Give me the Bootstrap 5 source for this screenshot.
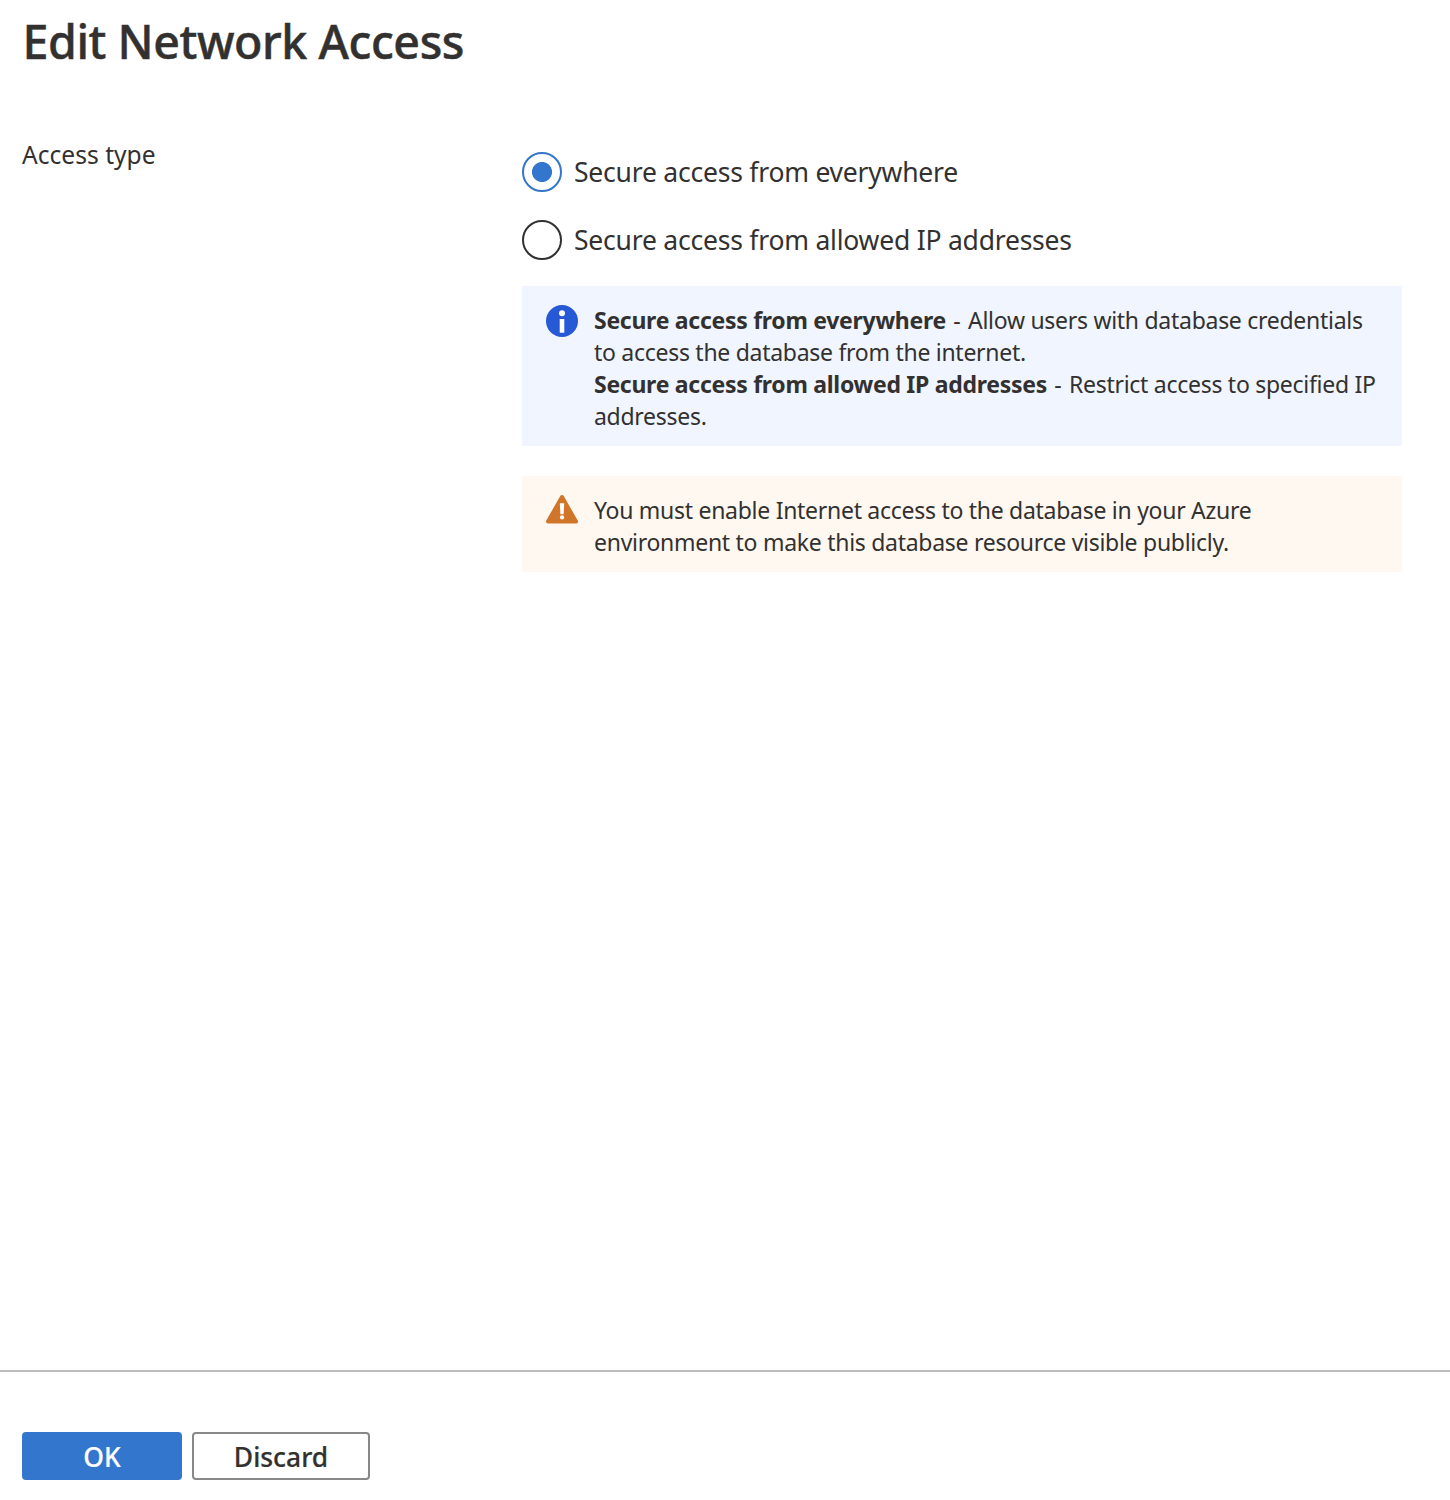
<!DOCTYPE html>
<html lang="en">
<head>
<meta charset="utf-8">
<meta name="viewport" content="width=device-width, initial-scale=1">
<title>Edit Network Access</title>
<link href="https://cdn.jsdelivr.net/npm/bootstrap@5.3.0/dist/css/bootstrap.min.css" rel="stylesheet">
<style>
body{font-family:"Noto Sans","Open Sans",sans-serif;color:#323130;background:#fff}
.page-title{font-size:46.5px;font-weight:500;line-height:60px;letter-spacing:-.42px;-webkit-text-stroke:.5px #323130;padding:11px 0 0 22.5px;white-space:nowrap}
.form-area{padding:68px 48px 0 22px}
.field-label{width:500px;font-size:24.6px;line-height:32px}
.field-body{width:880px;padding-top:13px}
.choice{height:40px;font-size:26.5px;letter-spacing:-.22px;margin-bottom:28px;gap:12px;white-space:nowrap}
.choice span{padding-top:2px}
.choice .form-check-input{width:40px;height:40px;border:2px solid #323130;box-shadow:none}
.choice .form-check-input:checked{border-color:#3376cd;background:#fff radial-gradient(circle,#3376cd 9.6px,transparent 10.4px)}
.note{font-size:23px;line-height:32px;letter-spacing:-.28px;padding:18px 16px 14px 24px;gap:16px;border:0;border-radius:0;color:#323130;white-space:nowrap}
.note-info{background:#f0f5ff;margin:-2px 0 30px}
.note-warn{background:#fff8f1}
.dash{padding:0 2px 0 1.5px}
.footer-bar{height:130px;border-top:2px solid #bdbdbd;padding:60px 22px 0;gap:10px}
.action{height:48px;font-size:26.4px;font-weight:500;border-radius:4px;padding:0;line-height:46px;border-width:2px;-webkit-text-stroke:.2px}
.action-ok{width:160px;background:#3376cd;border-color:#3376cd;color:#fff}
.action-discard{width:178px;background:#fff;border-color:#8a8886;color:#323130}
</style>
<script src="https://cdn.jsdelivr.net/npm/bootstrap@5.3.0/dist/js/bootstrap.bundle.min.js"></script>
</head>
<body>
<form class="d-flex flex-column vh-100">
<h1 class="page-title m-0">Edit Network Access</h1>
<main class="form-area d-flex flex-grow-1">
<div class="field-label flex-shrink-0">Access type</div>
<div class="field-body flex-shrink-0">
<label class="choice d-flex align-items-center"><input class="form-check-input m-0 flex-shrink-0" type="radio" name="access" checked><span>Secure access from everywhere</span></label>
<label class="choice d-flex align-items-center"><input class="form-check-input m-0 flex-shrink-0" type="radio" name="access"><span>Secure access from allowed IP addresses</span></label>
<div class="alert note note-info d-flex align-items-start"><svg class="flex-shrink-0" width="32" height="34"><circle cx="16" cy="17" r="16" fill="#2559d5"/><circle cx="16" cy="9.2" r="3" fill="#fff"/><path d="M13.7 15h4.6v13.8h-4.6z" fill="#fff"/></svg><div><b>Secure access from everywhere</b> <span class="dash">-</span> Allow users with database credentials<br>to access the database from the internet.<br><b>Secure access from allowed IP addresses</b> <span class="dash">-</span> Restrict access to specified IP<br>addresses.</div></div>
<div class="alert note note-warn d-flex align-items-start mb-0"><svg class="flex-shrink-0" width="32" height="32"><path d="M16 3 30 27.5H2z" fill="#d07529" stroke="#d07529" stroke-width="4" stroke-linejoin="round"/><path d="M13.8 9.3h4.4l-.6 11h-3.2z" fill="#fff"/><circle cx="16" cy="23.4" r="2.1" fill="#fff"/></svg><div>You must enable Internet access to the database in your Azure<br>environment to make this database resource visible publicly.</div></div>
</div>
</main>
<footer class="footer-bar d-flex align-items-start"><button type="button" class="btn action action-ok">OK</button><button type="button" class="btn action action-discard">Discard</button></footer>
</form>
</body>
</html>
